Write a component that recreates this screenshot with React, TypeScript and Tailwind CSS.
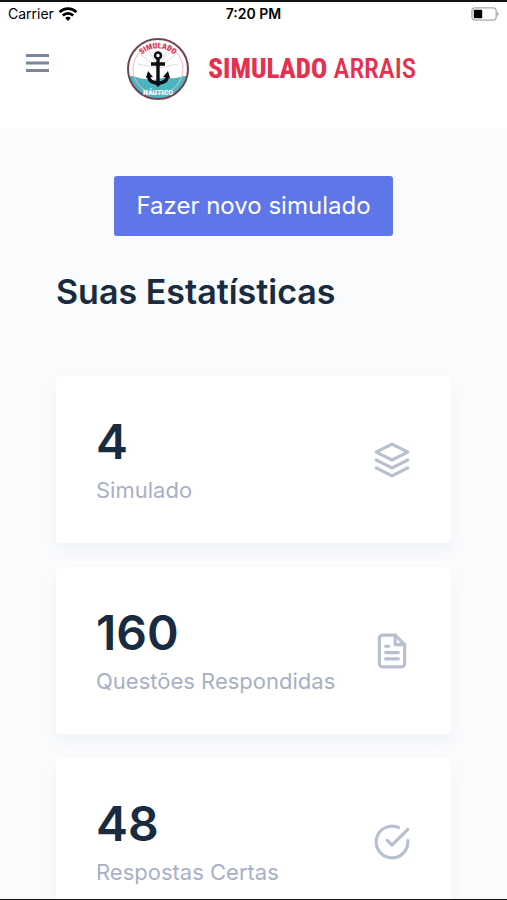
import type { IconType } from "react-icons";
import { FiCheckCircle, FiFileText, FiLayers } from "react-icons/fi";

interface iStat {
    value: number
    label: string
    icon: IconType
}

const stats: iStat[] = [
    { value: 4, label: "Simulado", icon: FiLayers },
    { value: 160, label: "Questões Respondidas", icon: FiFileText },
    { value: 48, label: "Respostas Certas", icon: FiCheckCircle },
]

function StatusBar(){
    return(
        <div className="grid grid-cols-3 items-center h-6 px-2 text-black">
            <div className="flex items-center gap-1">
                <span className="text-sm">Carrier</span>
                <svg viewBox="0 0 20 15" className="w-5 h-4" fill="none" stroke="currentColor" strokeWidth="2.6">
                    <path d="M1.6 5.6a12 12 0 0 1 16.8 0" />
                    <path d="M4.8 9a7.4 7.4 0 0 1 10.4 0" />
                    <path d="M10 14.4l-2.8-2.9a4 4 0 0 1 5.6 0z" fill="currentColor" stroke="none" />
                </svg>
            </div>
            <span className="text-center text-sm font-semibold">7:20 PM</span>
            <svg viewBox="0 0 30 15" className="w-7 h-4 ml-auto">
                <rect x="1" y="1" width="26" height="13" rx="3.5" fill="none" stroke="#a9a9a9" strokeWidth="1.4" />
                <rect x="3" y="3" width="9" height="9" rx="1" fill="#000" />
                <path d="M28 5q3.500 2.500 0 5z" fill="#a9a9a9" />
            </svg>
        </div>
    )
}

function Logo(){
    return(
        <svg viewBox="0 0 64 64" className="w-16 h-16 shrink-0" role="img" aria-label="Simulado Náutico">
            <defs>
                <clipPath id="badge">
                    <circle cx="32" cy="32" r="30" />
                </clipPath>
                <path id="arc" d="M11 25a23 23 0 0 1 42 0" />
            </defs>
            <circle cx="32" cy="32" r="30" fill="#fff" />
            <g stroke="#dcdcdc" strokeWidth="1">
                <path d="M32 31L12 27M32 31L15 18M32 31L49 18M32 31L52 27M32 31L23 14M32 31L41 14" />
            </g>
            <path d="M0 40q5-2 10 0t10 2q6 2 12 0t12-1q5 1 10-1t10 0v26H0z" fill="#4db5bf" clipPath="url(#badge)" />
            <circle cx="32" cy="32" r="25" fill="none" stroke="#f3b7c1" strokeWidth="1" />
            <circle cx="32" cy="32" r="30" fill="none" stroke="#6f4550" strokeWidth="2" />
            <text fill="#e2375a" fontSize="8" fontWeight="900" fontFamily="Roboto Condensed, Roboto, sans-serif">
                <textPath href="#arc" startOffset="50%" textAnchor="middle">SIMULADO</textPath>
            </text>
            <g fill="none" stroke="#0b0f14" strokeWidth="3.4">
                <circle cx="32" cy="18.500" r="3" strokeWidth="2.6" />
                <path d="M32 21v25M25 27h14" />
                <path d="M22.500 38q0 8 9.500 8t9.500-8" />
            </g>
            <path d="M20 41l2-7 5 6zM44 41l-2-7-5 6zM28 46h8l-4 4z" fill="#0b0f14" />
            <text x="32" y="58" textAnchor="middle" fill="#fff" fontSize="8" fontWeight="700" fontFamily="Roboto Condensed, Roboto, sans-serif">NÁUTICO</text>
        </svg>
    )
}

function StatCard({ stat }: { stat: iStat }){
    const Icon = stat.icon
    return(
        <li className="flex items-center justify-between h-[167px] px-10 bg-white rounded shadow-[0_8px_16px_rgba(30,60,110,0.04)]">
            <div>
                <p className="text-5xl leading-[56px] font-semibold text-[#192b40]">{stat.value}</p>
                <p className="pt-1 text-[22px] leading-8 text-[#a8b0c5]">{stat.label}</p>
            </div>
            <Icon className="size-[38px] shrink-0 text-[#b8c0d0]" />
        </li>
    )
}

export default function App(){
    return(
        <div className="h-screen flex flex-col overflow-hidden bg-[#f9fbfd] border-t-2 border-b border-[#111] font-['Inter',sans-serif]">
            <header className="shrink-0 bg-white">
                <StatusBar />
                <div className="flex items-center justify-between h-[102px] pl-6 pr-[91px] pb-4">
                    <button type="button" aria-label="Menu" className="w-7 pb-3 text-[#7b869b]">
                        <svg viewBox="0 0 28 24" className="w-7 h-6" stroke="currentColor" strokeWidth="3">
                            <path d="M2 4.500h23M2 12h23M2 19.500h23" />
                        </svg>
                    </button>
                    <a href="#" className="flex items-center gap-[18px]">
                        <Logo />
                        <span className="whitespace-nowrap text-[27px] leading-8 font-medium text-[#e4314f] font-['Roboto_Condensed',Roboto,sans-serif]">
                            <span className="font-extrabold">SIMULADO</span> ARRAIS
                        </span>
                    </a>
                </div>
            </header>
            <main className="flex-1 min-h-0 overflow-hidden px-14 pt-12">
                <div className="text-center">
                    <button type="button" className="h-[60px] px-[22px] rounded-[3px] bg-[#5f76e8] text-white text-2xl">
                        Fazer novo simulado
                    </button>
                </div>
                <h1 className="pt-9 text-[34px] leading-10 font-semibold text-[#192b40]">Suas Estatísticas</h1>
                <ul className="flex flex-col gap-6 pt-16">
                    {stats.map((stat) => (
                        <StatCard key={stat.label} stat={stat} />
                    ))}
                </ul>
            </main>
        </div>
    )
}
